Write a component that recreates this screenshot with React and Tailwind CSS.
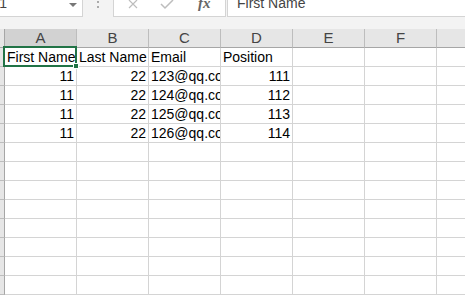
import { useState } from "react";

//////////////////////////////////////////////
const columns = ["A", "B", "C", "D", "E", "F", "G"];
const data = [
	["First Name", "Last Name", "Email", "Position"],
	[11, 22, "123@qq.com", 111],
	[11, 22, "124@qq.com", 112],
	[11, 22, "125@qq.com", 113],
	[11, 22, "126@qq.com", 114],
];
const ROWS = 13;

//////////////////////////////////////////////
function TopBar() {
	return (
		<div className="flex h-[29px] bg-[#f3f3f3] shrink-0">
			<div className="relative w-[83px] h-[17px] bg-white border-r border-b border-[#d4d4d4] overflow-hidden">
				<div className="-ml-[10px] -mt-[6px] text-[14px] leading-[18px] text-[#444]">A1</div>
				<div className="absolute left-[69px] top-[3px] w-0 h-0 border-l-[4px] border-r-[4px] border-t-[4px] border-l-transparent border-r-transparent border-t-[#777]"></div>
			</div>
			<div className="w-[30px] flex flex-col items-center gap-[3px] pt-[1px]">
				<div className="w-[2px] h-[2px] bg-[#aaa]"></div>
				<div className="w-[2px] h-[2px] bg-[#aaa]"></div>
			</div>
			<div className="w-[113px] h-[17px] bg-white border-l border-r border-b border-[#d4d4d4] flex items-start">
				<svg width="10" height="9" viewBox="0 0 10 9" className="ml-[14px]">
					<path d="M1 0 L9 8 M9 0 L1 8" stroke="#bdbdbd" strokeWidth="1.2" fill="none" />
				</svg>
				<svg width="14" height="10" viewBox="0 0 14 10" className="ml-[22px]">
					<path d="M1 4 L5 8 L13 0" stroke="#bdbdbd" strokeWidth="1.5" fill="none" />
				</svg>
				<div className="ml-[24px] -mt-[6px] text-[15px] leading-[18px] italic font-bold text-[#666] font-['Liberation_Serif',serif]">fx</div>
			</div>
			<div className="ml-[1px] flex-1 h-[17px] bg-white border-l border-b border-[#d4d4d4] overflow-hidden">
				<div className="pl-[9px] -mt-[6px] text-[14px] leading-[18px] text-[#444]">First Name</div>
			</div>
		</div>
	);
}

//////////////////////////////////////////////
function HeaderRow() {
	return (
		<div className="flex h-[19px] shrink-0">
			<div className="w-[5px] shrink-0 bg-[#e6e6e6] border-r border-b border-[#a6a6a6]"></div>
			{columns.map((c, i) => (
				<div
					key={c}
					className={
						"w-[72px] shrink-0 flex items-end justify-center border-r border-b text-[15px] leading-[18px] text-[#444] " +
						(i == 0 ? "bg-[#d2d2d2] border-r-[#bdbdbd] border-b-[#217346]" : "bg-[#e6e6e6] border-r-[#bdbdbd] border-b-[#a6a6a6]")
					}
				>
					{c}
				</div>
			))}
		</div>
	);
}

//////////////////////////////////////////////
function Row(props) {
	const cells = props.cells || [];
	return (
		<div className="flex h-[19px] shrink-0">
			<div className="w-[5px] shrink-0 bg-[#e6e6e6] border-r border-b border-r-[#a6a6a6] border-b-[#bdbdbd]"></div>
			{columns.map((c, i) => {
				const v = cells[i];
				const num = typeof v === "number";
				return (
					<div
						key={c}
						className={
							"w-[72px] shrink-0 border-r border-b border-[#d4d4d4] px-[2px] text-[14px] leading-[19px] text-black overflow-hidden whitespace-nowrap " +
							(num ? "text-right" : "text-left")
						}
					>
						{v}
					</div>
				);
			})}
		</div>
	);
}

//////////////////////////////////////////////
export default function App() {
	const [sel] = useState(true);
	return (
		<div className="relative w-[465px] h-[295px] overflow-hidden bg-white font-['Liberation_Sans',sans-serif]">
			<TopBar />
			<HeaderRow />
			{Array.from({ length: ROWS }).map((_, r) => (
				<Row key={r} cells={data[r]} />
			))}
			{sel && (
				<div className="absolute left-[3px] top-[46px] w-[74px] h-[21px] border-2 border-[#217346]">
					<div className="absolute -right-[4px] -bottom-[4px] w-[6px] h-[6px] bg-[#217346] border border-white"></div>
				</div>
			)}
		</div>
	);
}
